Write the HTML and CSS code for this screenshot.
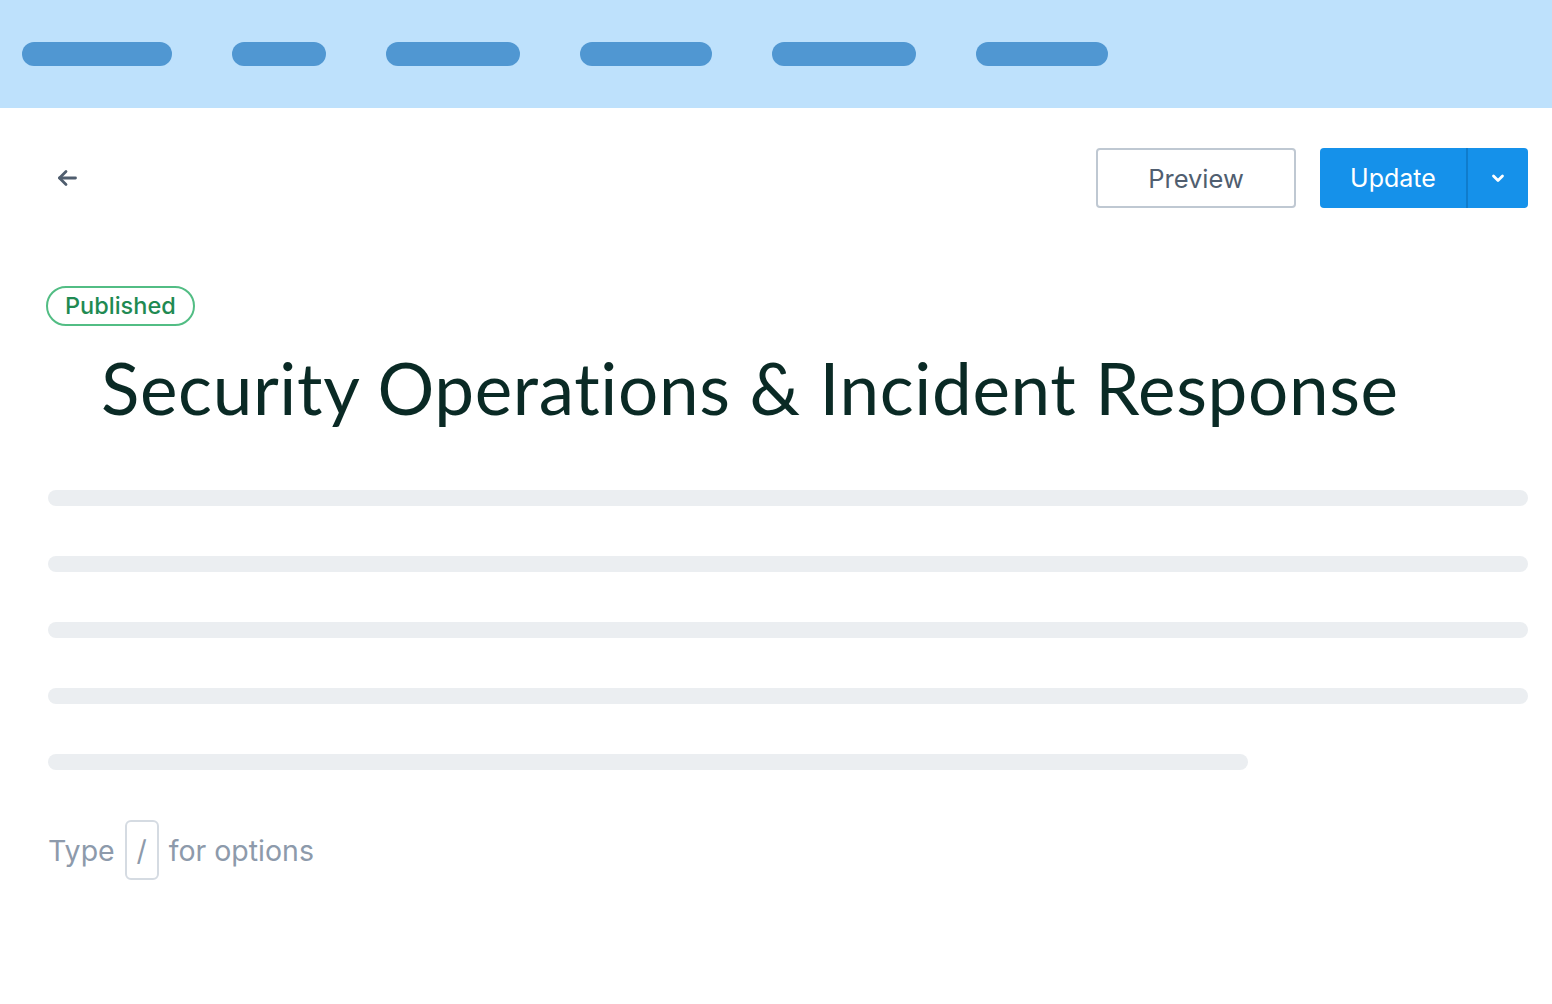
FILE: index.html
```html
<!DOCTYPE html>
<html>
<head>
<meta charset="utf-8">
<link rel="stylesheet" href="styles.css">
</head>
<body>
<header class="topbar">
  <span class="nav-pill w150"></span>
  <span class="nav-pill w94"></span>
  <span class="nav-pill w134"></span>
  <span class="nav-pill w132"></span>
  <span class="nav-pill w144"></span>
  <span class="nav-pill w132"></span>
</header>
<main class="editor">
  <div class="toolbar">
    <button class="back" aria-label="Back">
      <svg width="24" height="24" viewBox="0 0 24 24" fill="none" stroke="#4f5d6e" stroke-width="2.8" stroke-linecap="round" stroke-linejoin="round"><path d="M20.5 12H4.5"/><path d="M11 5.5L4.5 12l6.5 6.5"/></svg>
    </button>
    <div class="actions">
      <button class="btn-preview">Preview</button>
      <div class="btn-update">
        <span class="update-label">Update</span>
        <span class="update-caret">
          <svg width="18" height="18" viewBox="0 0 18 18" fill="none" stroke="#fff" stroke-width="2.8" stroke-linecap="round" stroke-linejoin="round"><path d="M4.5 7l4.5 4.5L13.5 7"/></svg>
        </span>
      </div>
    </div>
  </div>
  <div class="status"><span class="badge">Published</span></div>
  <h1 class="title">Security Operations &amp; Incident Response</h1>
  <div class="skeleton">
    <div class="line"></div>
    <div class="line"></div>
    <div class="line"></div>
    <div class="line"></div>
    <div class="line short"></div>
  </div>
  <div class="hint">Type <span class="key">/</span> for options</div>
</main>
</body>
</html>
```
FILE: styles.css
```css
* { box-sizing: border-box; }
body {
  margin: 0;
  background: #ffffff;
  font-family: Inter, "Noto Sans", sans-serif;
}
.topbar {
  height: 108px;
  background: #bee1fc;
  display: flex;
  align-items: center;
  gap: 60px;
  padding-left: 22px;
}
.nav-pill {
  height: 24px;
  border-radius: 12px;
  background: #5097d2;
}
.w150 { width: 150px; }
.w94 { width: 94px; }
.w134 { width: 134px; }
.w132 { width: 132px; }
.w144 { width: 144px; }
.editor {
  padding: 40px 24px 0 48px;
}
.toolbar {
  display: flex;
  align-items: center;
  justify-content: space-between;
  height: 60px;
}
.back {
  border: none;
  background: none;
  padding: 0;
  margin-left: 7px;
  width: 24px;
  height: 24px;
  display: flex;
}
.actions {
  display: flex;
  align-items: center;
  gap: 24px;
}
.btn-preview {
  width: 200px;
  height: 60px;
  border: 2px solid #bfc8d2;
  border-radius: 4px;
  background: #fff;
  color: #505e6f;
  font-family: Inter, sans-serif;
  font-size: 25.5px;
  font-weight: 400;
}
.btn-update {
  display: flex;
  height: 60px;
  width: 208px;
  background: #1591ea;
  border-radius: 4px;
  color: #fff;
  overflow: hidden;
}
.update-label {
  width: 148px;
  display: flex;
  align-items: center;
  justify-content: center;
  font-size: 25px;
  border-right: 2px solid #0f7ccc;
}
.update-caret {
  flex: 1;
  display: flex;
  align-items: center;
  justify-content: center;
}
.status {
  margin-top: 78px;
  margin-left: -2px;
}
.badge {
  display: inline-block;
  height: 40px;
  line-height: 36px;
  padding: 0 17px;
  border: 2px solid #52bd84;
  border-radius: 20px;
  color: #1f8a52;
  font-size: 23.5px;
  font-weight: 500;
}
.title {
  margin: 14px 0 0 53px;
  font-family: Lato, sans-serif;
  font-weight: 400;
  font-size: 71px;
  letter-spacing: 0.65px;
  font-variant-ligatures: none;
  line-height: 96px;
  color: #0a2a25;
}
.skeleton {
  margin-top: 54px;
  display: flex;
  flex-direction: column;
  gap: 50px;
}
.line {
  height: 16px;
  border-radius: 8px;
  background: #ebeef1;
}
.line.short { width: 1200px; }
.hint {
  margin-top: 50px;
  display: flex;
  align-items: center;
  gap: 10px;
  color: #8d9aab;
  font-size: 28.5px;
}
.key {
  display: inline-flex;
  align-items: center;
  justify-content: center;
  width: 34px;
  height: 60px;
  border: 2px solid #d5dbe2;
  border-radius: 6px;
}
```
